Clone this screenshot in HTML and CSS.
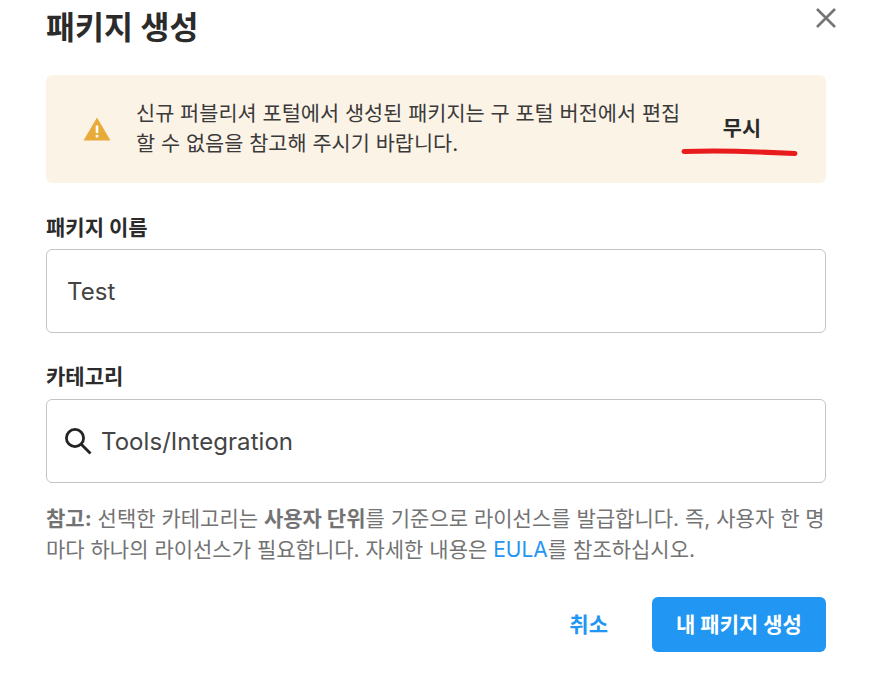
FILE: index.html
```html
<!DOCTYPE html>
<html lang="ko">
<head>
<meta charset="utf-8">
<title>패키지 생성</title>
<link rel="stylesheet" href="styles.css">
</head>
<body>
<main class="dialog">
  <header class="head">
    <h1 class="title">패키지 생성</h1>
    <button class="close" aria-label="닫기">
      <svg width="20" height="20" viewBox="0 0 20 20"><path d="M1 1 19 19M19 1 1 19" stroke="#757575" stroke-width="2.6" fill="none"/></svg>
    </button>
  </header>
  <section class="notice">
    <svg class="warn" width="28" height="24" viewBox="0 0 28 24"><path d="M14 0.5 27.5 23.5H0.5Z" fill="#e8ab3a"/><rect x="12.7" y="8.5" width="2.6" height="7.5" fill="#fff"/><rect x="12.7" y="17.8" width="2.6" height="2.7" fill="#fff"/></svg>
    <p class="notice-text">신규 퍼블리셔 포털에서 생성된 패키지는 구 포털 버전에서 편집<br>할 수 없음을 참고해 주시기 바랍니다.</p>
    <button class="dismiss">무시</button>
    <svg class="scribble" width="118" height="10" viewBox="0 0 118 10"><path d="M3 4.5C30 3.5 55 4 78 5C92 5.5 103 6 114 6.5" stroke="#e81c1c" stroke-width="5" stroke-linecap="round" fill="none"/></svg>
  </section>
  <label class="field-label name-label">패키지 이름</label>
  <div class="input">Test</div>
  <label class="field-label cat-label">카테고리</label>
  <div class="input search">
    <svg width="28" height="28" viewBox="0 0 28 28"><circle cx="11" cy="11" r="8.6" stroke="#232323" stroke-width="2.8" fill="none"/><path d="M17.5 17.5 26.5 26.5" stroke="#232323" stroke-width="2.8" fill="none"/></svg>
    <span>Tools/Integration</span>
  </div>
  <p class="note"><b>참고:</b> 선택한 카테고리는 <b class="dark">사용자 단위</b>를 기준으로 라이선스를 발급합니다. 즉, 사용자 한 명<br>마다 하나의 라이선스가 필요합니다. 자세한 내용은 <a href="#">EULA</a>를 참조하십시오.</p>
  <footer class="actions">
    <button class="cancel">취소</button>
    <button class="create">내 패키지 생성</button>
  </footer>
</main>
</body>
</html>
```
FILE: styles.css
```css
* { box-sizing: border-box; }
html, body { margin: 0; background: #fff; }
body { font-family: Inter, "Noto Sans CJK KR", sans-serif; color: #2a2a2a; overflow: hidden; }
.dialog { width: 883px; height: 688px; padding: 0 57px 0 46px; }
.head { display: flex; justify-content: space-between; height: 75px; }
.title { margin: 8px 0 0; font-size: 31.5px; line-height: 40px; font-weight: 700; color: #2b2b2b; }
.close { border: 0; background: none; padding: 0; width: 20px; height: 20px; margin: 8px -10px 0 0; }
.close svg { display: block; }
.notice { position: relative; display: flex; align-items: center; height: 108px; background: #fcf3e7; border-radius: 6px; padding: 0 0 0 37px; }
.warn { flex: none; }
.notice-text { margin: 0 0 0 25px; width: 552px; font-size: 20.8px; line-height: 30px; color: #3a3a3a; white-space: nowrap; }
.dismiss { border: 0; background: none; padding: 0; position: absolute; left: 658px; top: 40px; width: 76px; font: 700 20.8px/28px Inter, "Noto Sans CJK KR", sans-serif; color: #2a2a2a; }
.scribble { position: absolute; left: 635px; top: 72px; }
.field-label { display: block; font-size: 21px; line-height: 28px; font-weight: 700; color: #2b2b2b; }
.name-label { margin-top: 31px; }
.cat-label { margin-top: 30px; }
.input { display: flex; align-items: center; height: 84px; margin-top: 8px; padding: 0 20px; border: 1px solid #c4c4c4; border-radius: 6px; font-size: 24px; letter-spacing: 0.05px; color: #444; background: #fff; }
.name-label + .input { margin-top: 7px; }
.search { gap: 9px; padding-left: 17px; }
.search svg { flex: none; }
.note { margin: 20px 0 0; font-size: 21px; line-height: 31px; color: #737373; white-space: nowrap; }
.note b { font-weight: 700; }
.note a { color: #2196f3; text-decoration: none; }
.actions { display: flex; justify-content: flex-end; align-items: center; gap: 44px; margin-top: 32px; }
.actions button { border: 0; font: 700 21px/28px Inter, "Noto Sans CJK KR", sans-serif; }
.cancel { background: none; color: #2196f3; padding: 0; }
.create { width: 174px; height: 55px; background: #2196f3; color: #fff; border-radius: 6px; padding: 0; }
```
